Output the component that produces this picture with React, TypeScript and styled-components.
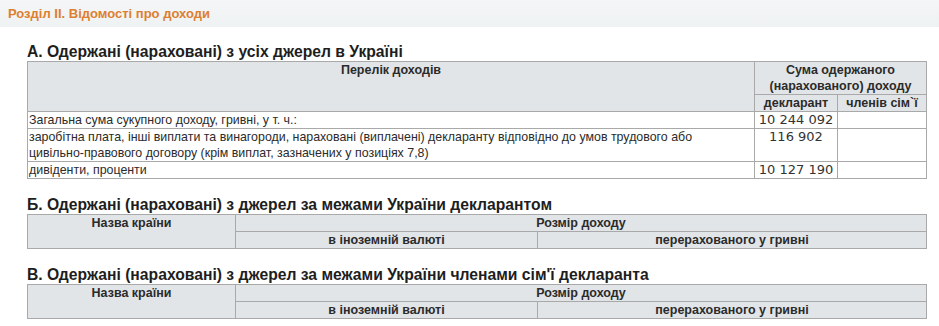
import React from "react";
import styled, { createGlobalStyle } from "styled-components";

const GlobalStyle = createGlobalStyle`
  html, body {
    margin: 0;
    padding: 0;
    background: #ffffff;
  }
  body {
    font-family: "Liberation Sans", Arial, sans-serif;
    color: #2b2b2b;
  }
`;

const TitleBar = styled.div`
  height: 27px;
  padding-left: 8px;
  display: flex;
  align-items: center;
  background: linear-gradient(#f4f6f7, #eff2f3);
`;

const Title = styled.h2`
  margin: 0;
  font-size: 13px;
  font-weight: 700;
  color: #dd7f30;
`;

const Content = styled.div`
  width: 900px;
  margin-left: 27px;
  padding-top: 16px;
`;

const Heading = styled.h3<{ $gap?: number }>`
  margin: ${(p) => p.$gap ?? 0}px 0 0;
  font-size: 15.7px;
  line-height: 18px;
  font-weight: 700;
  color: #1e1e1e;
`;

const Table = styled.table`
  width: 900px;
  border-collapse: collapse;
  table-layout: fixed;
  font-size: 12.4px;
  line-height: 16px;
`;

const HeadCell = styled.th<{ $top?: boolean }>`
  background: #e2e5e8;
  border: 1px solid #a9a9a9;
  padding: 0 2px;
  font-size: 12.5px;
  font-weight: 700;
  text-align: center;
  vertical-align: ${(p) => (p.$top ? "top" : "middle")};
  color: #2b2b2b;
`;

const Cell = styled.td`
  border: 1px solid #a9a9a9;
  padding: 0 1px;
  vertical-align: top;
`;

const AmountCell = styled(Cell)`
  font-family: "DejaVu Sans", Verdana, sans-serif;
  font-size: 13px;
  text-align: center;
  color: #333;
`;

type Income = { label: React.ReactNode; declarant: string; family: string };

const incomes: Income[] = [
  { label: "Загальна сума сукупного доходу, гривні, у т. ч.:", declarant: "10 244 092", family: "" },
  {
    label: (
      <>
        заробітна плата, інші виплати та винагороди, нараховані (виплачені) декларанту відповідно до умов трудового або
        <br />
        цивільно-правового договору (крім виплат, зазначених у позиціях 7,8)
      </>
    ),
    declarant: "116 902",
    family: "",
  },
  { label: "дивіденти, проценти", declarant: "10 127 190", family: "" },
];

const ForeignTable = () => (
  <Table>
    <colgroup>
      <col style={{ width: 208 }} />
      <col style={{ width: 302 }} />
      <col />
    </colgroup>
    <thead>
      <tr>
        <HeadCell rowSpan={2} $top>
          Назва країни
        </HeadCell>
        <HeadCell colSpan={2}>Розмір доходу</HeadCell>
      </tr>
      <tr>
        <HeadCell>в іноземній валюті</HeadCell>
        <HeadCell>перерахованого у гривні</HeadCell>
      </tr>
    </thead>
  </Table>
);

export default function App() {
  return (
    <>
      <GlobalStyle />
      <TitleBar>
        <Title>Розділ II. Відомості про доходи</Title>
      </TitleBar>
      <Content>
        <Heading>А. Одержані (нараховані) з усіх джерел в Україні</Heading>
        <Table>
          <colgroup>
            <col />
            <col style={{ width: 83 }} />
            <col style={{ width: 89 }} />
          </colgroup>
          <thead>
            <tr>
              <HeadCell rowSpan={2} $top>
                Перелік доходів
              </HeadCell>
              <HeadCell colSpan={2}>
                Сума одержаного
                <br />
                (нарахованого) доходу
              </HeadCell>
            </tr>
            <tr>
              <HeadCell>декларант</HeadCell>
              <HeadCell>членів сім`ї</HeadCell>
            </tr>
          </thead>
          <tbody>
            {incomes.map((row, i) => (
              <tr key={i}>
                <Cell>{row.label}</Cell>
                <AmountCell>{row.declarant}</AmountCell>
                <AmountCell>{row.family}</AmountCell>
              </tr>
            ))}
          </tbody>
        </Table>

        <Heading $gap={17}>Б. Одержані (нараховані) з джерел за межами України декларантом</Heading>
        <ForeignTable />

        <Heading $gap={17}>В. Одержані (нараховані) з джерел за межами України членами сім'ї декларанта</Heading>
        <ForeignTable />
      </Content>
    </>
  );
}
